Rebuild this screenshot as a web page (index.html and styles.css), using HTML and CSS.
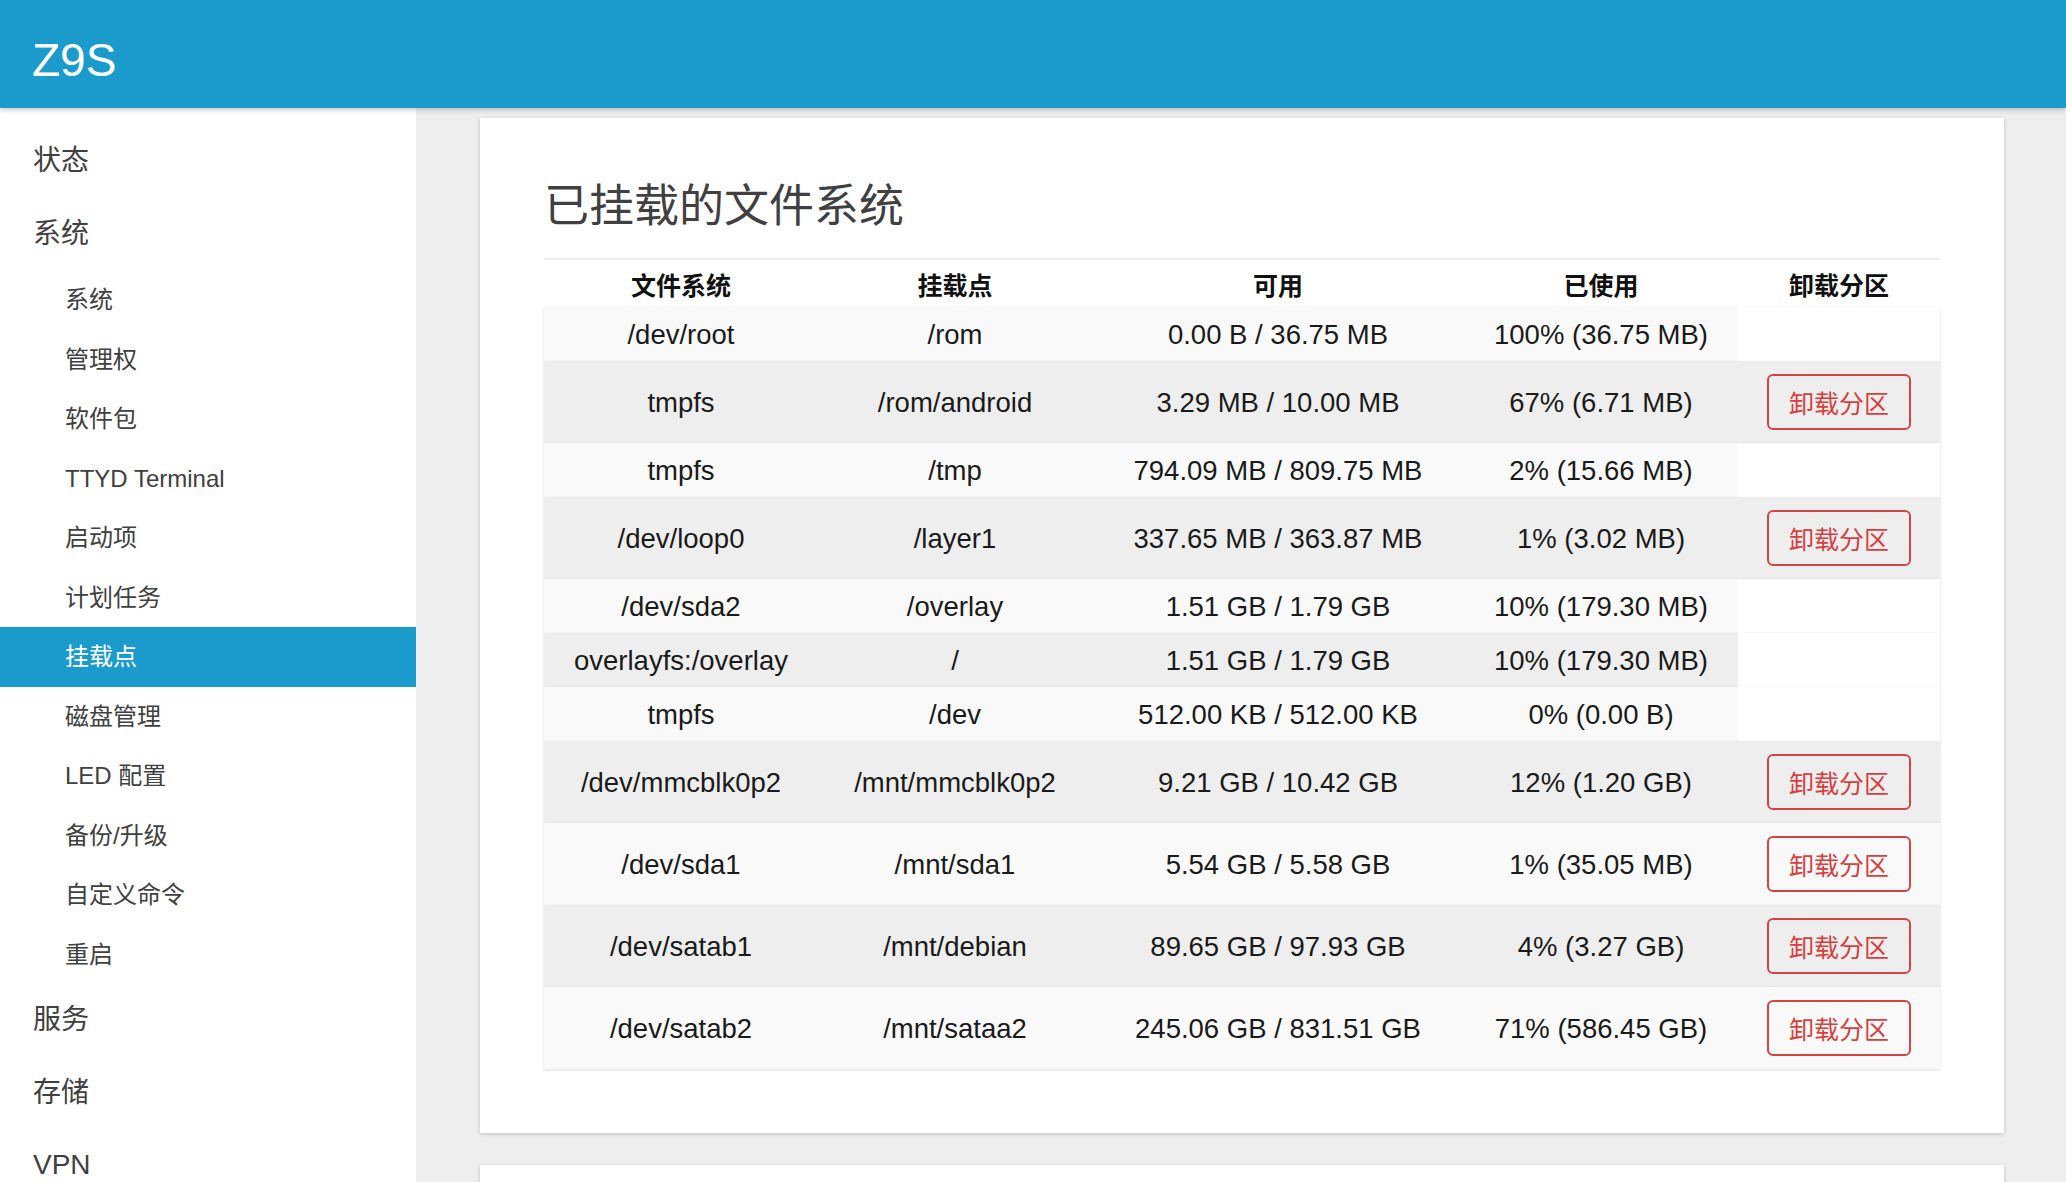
FILE: index.html
```html
<!DOCTYPE html>
<html lang="zh-CN">
<head>
<meta charset="utf-8">
<title>Z9S - 挂载点</title>
<link rel="stylesheet" href="styles.css">
</head>
<body>
<header class="topbar">
  <span class="brand">Z9S</span>
</header>
<div class="layout">
  <nav class="sidebar">
    <div class="nav-top">状态</div>
    <div class="nav-top">系统</div>
    <ul class="nav-sub">
      <li>系统</li>
      <li>管理权</li>
      <li>软件包</li>
      <li>TTYD Terminal</li>
      <li>启动项</li>
      <li>计划任务</li>
      <li class="active">挂载点</li>
      <li>磁盘管理</li>
      <li>LED 配置</li>
      <li>备份/升级</li>
      <li>自定义命令</li>
      <li>重启</li>
    </ul>
    <div class="nav-top">服务</div>
    <div class="nav-top">存储</div>
    <div class="nav-top">VPN</div>
  </nav>
  <main class="main">
    <section class="card">
      <h2 class="card-title">已挂载的文件系统</h2>
      <div class="table">
        <div class="thead">
          <div class="th">文件系统</div>
          <div class="th">挂载点</div>
          <div class="th">可用</div>
          <div class="th">已使用</div>
          <div class="th">卸载分区</div>
        </div>
        <div class="row odd">
          <div class="td">/dev/root</div><div class="td">/rom</div><div class="td">0.00 B / 36.75 MB</div><div class="td">100% (36.75 MB)</div><div class="td-act"></div>
        </div>
        <div class="row even has-btn">
          <div class="td">tmpfs</div><div class="td">/rom/android</div><div class="td">3.29 MB / 10.00 MB</div><div class="td">67% (6.71 MB)</div><div class="td-act"><button class="btn-umount">卸载分区</button></div>
        </div>
        <div class="row odd">
          <div class="td">tmpfs</div><div class="td">/tmp</div><div class="td">794.09 MB / 809.75 MB</div><div class="td">2% (15.66 MB)</div><div class="td-act"></div>
        </div>
        <div class="row even has-btn">
          <div class="td">/dev/loop0</div><div class="td">/layer1</div><div class="td">337.65 MB / 363.87 MB</div><div class="td">1% (3.02 MB)</div><div class="td-act"><button class="btn-umount">卸载分区</button></div>
        </div>
        <div class="row odd">
          <div class="td">/dev/sda2</div><div class="td">/overlay</div><div class="td">1.51 GB / 1.79 GB</div><div class="td">10% (179.30 MB)</div><div class="td-act"></div>
        </div>
        <div class="row even">
          <div class="td">overlayfs:/overlay</div><div class="td">/</div><div class="td">1.51 GB / 1.79 GB</div><div class="td">10% (179.30 MB)</div><div class="td-act"></div>
        </div>
        <div class="row odd">
          <div class="td">tmpfs</div><div class="td">/dev</div><div class="td">512.00 KB / 512.00 KB</div><div class="td">0% (0.00 B)</div><div class="td-act"></div>
        </div>
        <div class="row even has-btn">
          <div class="td">/dev/mmcblk0p2</div><div class="td">/mnt/mmcblk0p2</div><div class="td">9.21 GB / 10.42 GB</div><div class="td">12% (1.20 GB)</div><div class="td-act"><button class="btn-umount">卸载分区</button></div>
        </div>
        <div class="row odd has-btn">
          <div class="td">/dev/sda1</div><div class="td">/mnt/sda1</div><div class="td">5.54 GB / 5.58 GB</div><div class="td">1% (35.05 MB)</div><div class="td-act"><button class="btn-umount">卸载分区</button></div>
        </div>
        <div class="row even has-btn">
          <div class="td">/dev/satab1</div><div class="td">/mnt/debian</div><div class="td">89.65 GB / 97.93 GB</div><div class="td">4% (3.27 GB)</div><div class="td-act"><button class="btn-umount">卸载分区</button></div>
        </div>
        <div class="row odd has-btn">
          <div class="td">/dev/satab2</div><div class="td">/mnt/sataa2</div><div class="td">245.06 GB / 831.51 GB</div><div class="td">71% (586.45 GB)</div><div class="td-act"><button class="btn-umount">卸载分区</button></div>
        </div>
      </div>
    </section>
    <section class="card card-next"></section>
  </main>
</div>
</body>
</html>
```

FILE: styles.css
```css
html, body {
  margin: 0;
  padding: 0;
  height: 100%;
  overflow: hidden;
}

body {
  font-family: "Liberation Sans", "Noto Sans CJK SC", sans-serif;
  background: #eeeeee;
  color: #222;
}

.topbar {
  position: relative;
  z-index: 2;
  height: 108px;
  box-sizing: border-box;
  padding: 12px 0 0 32px;
  background: #1a9bcb;
  box-shadow: 0 2px 5px rgba(0, 0, 0, 0.22);
}

.brand {
  display: block;
  font-size: 46px;
  line-height: 96px;
  color: #fff;
}

.layout {
  display: flex;
  height: calc(100% - 108px);
  overflow: hidden;
}

.sidebar {
  width: 416px;
  flex: none;
  background: #fff;
  padding-top: 17px;
  color: #404040;
}

.nav-top {
  height: 72.5px;
  line-height: 72.5px;
  padding-left: 33px;
  font-size: 28px;
}

.nav-sub {
  list-style: none;
  margin: 0;
  padding: 0;
}

.nav-sub li {
  height: 59.5px;
  line-height: 59.5px;
  padding-left: 65px;
  font-size: 24px;
}

.nav-sub li.active {
  background: #1a9bcb;
  color: #fff;
}

.main {
  flex: 1;
  padding: 10px 62px 0 64px;
}

.card {
  background: #fff;
  padding: 59px 64px 64px;
  box-shadow: 0 1px 4px rgba(0, 0, 0, 0.2);
}

.card-next {
  margin-top: 32px;
  height: 200px;
  padding: 0;
}

.card-title {
  margin: 0 0 21px;
  font-size: 45px;
  line-height: 60px;
  font-weight: normal;
  color: #404040;
}

.table {
  border-top: 2px solid #eeeeee;
}

.thead,
.row {
  display: grid;
  grid-template-columns: 274px 274px 372px 274px 1fr;
}

.thead {
  height: 47px;
  align-items: center;
}

.th {
  text-align: center;
  font-size: 25px;
  font-weight: bold;
  color: #111;
}

.row {
  position: relative;
  min-height: 54px;
  background: #fff;
  box-shadow: 0 1px 3px rgba(0, 0, 0, 0.14);
}

.td,
.td-act {
  display: flex;
  align-items: center;
  justify-content: center;
  padding-top: 1px;
  font-size: 27.5px;
  color: #1a1a1a;
  white-space: nowrap;
}

.row.odd .td { background: #f9f9f9; }
.row.even .td { background: #eeeeee; }

.row.has-btn .td-act { padding: 13px 0; }
.row.odd.has-btn .td-act { background: #f9f9f9; }
.row.even.has-btn .td-act { background: #eeeeee; }

.btn-umount {
  box-sizing: border-box;
  width: 144px;
  height: 56px;
  padding: 0;
  border: 2px solid #d54444;
  border-radius: 6px;
  background: transparent;
  color: #d73f3f;
  font-family: "Liberation Sans", "Noto Sans CJK SC", sans-serif;
  font-size: 25px;
  cursor: pointer;
}
```
